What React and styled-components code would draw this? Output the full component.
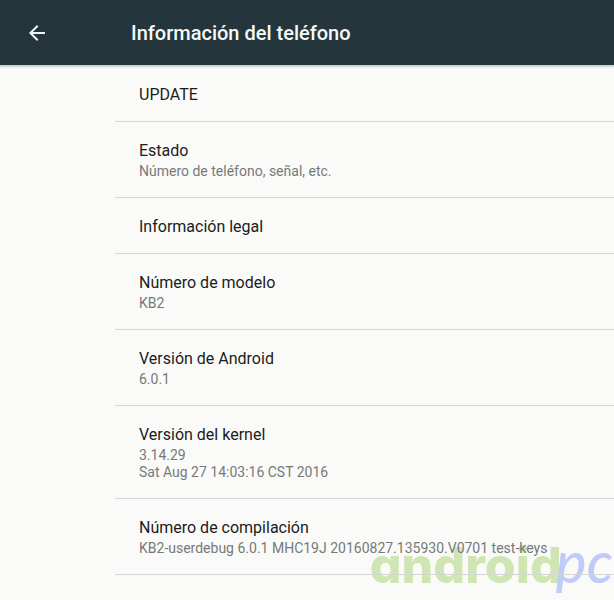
import React from "react";
import styled, { createGlobalStyle } from "styled-components";

const GlobalStyle = createGlobalStyle`
  body {
    margin: 0;
    background: #fafbf9;
    font-family: Roboto, "Liberation Sans", sans-serif;
  }
`;

const StyledScreen = styled.div`
  position: relative;
  isolation: isolate;
  min-height: 100vh;
  overflow: hidden;
`;

const Header = styled.header`
  display: flex;
  align-items: center;
  height: 65px;
  background: #25353c;
  box-shadow: 0 1px 2px 1px #c3cdd1;

  h1 {
    margin: 0;
    color: #f3fafb;
    font-size: 20px;
    font-weight: 500;
    line-height: 24px;
  }
`;

const BackButton = styled.button`
  display: flex;
  justify-content: center;
  width: 74px;
  margin-right: 57px;
  padding: 0;
  border: none;
  background: none;
  color: #edf7f8;
  cursor: pointer;
`;

const SettingsList = styled.ul`
  margin: 0 0 0 115px;
  padding: 1px 0 0;
  list-style: none;
`;

const SettingsItem = styled.li`
  padding: 18px 24px 15px;
  border-bottom: 1px solid #d3d6d5;

  h2 {
    margin: 0;
    color: #1c1c1c;
    font-size: 16px;
    font-weight: 400;
    line-height: 22px;
  }

  p {
    margin: 0;
    padding: 1px 0 2px;
    color: #777978;
    font-size: 14px;
    line-height: 17px;
    white-space: pre-line;
  }
`;

const Watermark = styled.div`
  position: absolute;
  right: 1px;
  bottom: 3px;
  z-index: -1;
  color: #cfe6b4;
  font-family: Inter, sans-serif;
  font-feature-settings: "cv11";
  font-size: 50px;
  font-weight: 800;
  line-height: 64px;
  pointer-events: none;

  span {
    margin-left: -6px;
    color: #bfcbf8;
    font-family: Lato, sans-serif;
    font-size: 58px;
    font-style: italic;
    font-weight: 500;
  }
`;

const settings = [
  { title: "UPDATE" },
  { title: "Estado", summary: "Número de teléfono, señal, etc." },
  { title: "Información legal" },
  { title: "Número de modelo", summary: "KB2" },
  { title: "Versión de Android", summary: "6.0.1" },
  {
    title: "Versión del kernel",
    summary: "3.14.29\nSat Aug 27 14:03:16 CST 2016",
  },
  {
    title: "Número de compilación",
    summary: "KB2-userdebug 6.0.1 MHC19J 20160827.135930.V0701 test-keys",
  },
];

const App = () => {
  return (
    <>
      <GlobalStyle />
      <StyledScreen>
        <Header>
          <BackButton type="button" aria-label="Atrás">
            <svg width="24" height="24" viewBox="0 0 24 24" fill="currentColor">
              <path d="M20 11H7.83l5.59-5.59L12 4l-8 8 8 8 1.41-1.41L7.83 13H20v-2z" />
            </svg>
          </BackButton>
          <h1>Información del teléfono</h1>
        </Header>
        <SettingsList>
          {settings.map(({ title, summary }) => (
            <SettingsItem key={title}>
              <h2>{title}</h2>
              {summary && <p>{summary}</p>}
            </SettingsItem>
          ))}
        </SettingsList>
        <Watermark>
          android<span>pc</span>
        </Watermark>
      </StyledScreen>
    </>
  );
};

export default App;
